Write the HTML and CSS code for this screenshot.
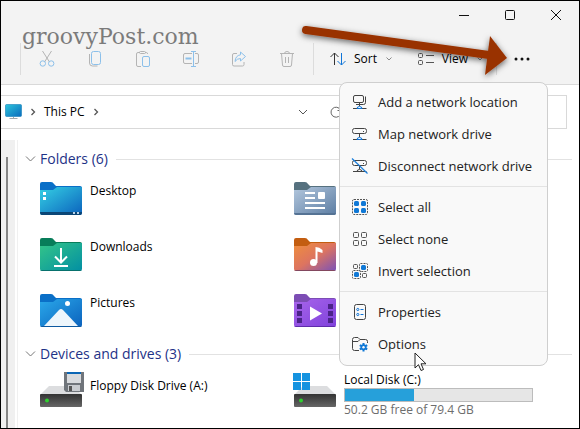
FILE: index.html
```html
<!DOCTYPE html>
<html lang="en">
<head>
<meta charset="utf-8">
<title>This PC</title>
<link rel="stylesheet" href="styles.css">
</head>
<body>
<div class="window">
  <header class="header">
    <div class="titlebar">
      <button class="caption" aria-label="Minimize"><svg width="12" height="12" viewBox="0 0 12 12"><path d="M1 6.5h10" stroke="#111" fill="none"/></svg></button>
      <button class="caption" aria-label="Maximize"><svg width="12" height="12" viewBox="0 0 12 12"><rect x="1.5" y="1.5" width="9" height="9" rx="1" stroke="#111" fill="none"/></svg></button>
      <button class="caption" aria-label="Close"><svg width="12" height="12" viewBox="0 0 12 12"><path d="M1 1l10 10M11 1L1 11" stroke="#111" fill="none"/></svg></button>
    </div>
    <div class="toolbar">
      <span class="divider"></span>
      <div class="tools">
        <button class="tool" aria-label="Cut"><svg width="16" height="18" viewBox="0 0 16 18" fill="none"><path d="M3.5 1l7 11M12.500 1l-7 11" stroke="#b4b4b4"/><circle cx="3.800" cy="13.500" r="2.700" stroke="#8cc0ea"/><circle cx="12.200" cy="13.500" r="2.700" stroke="#8cc0ea"/></svg></button>
        <button class="tool" aria-label="Copy"><svg width="16" height="18" viewBox="0 0 16 18" fill="none"><path d="M2.500 4v9q0 3 3 3h5" stroke="#b4b4b4"/><rect x="4.500" y="1.500" width="9" height="13" rx="2" stroke="#8cc0ea"/></svg></button>
        <button class="tool" aria-label="Paste"><svg width="16" height="18" viewBox="0 0 16 18" fill="none"><path d="M5 2.500H3q-1.500 0-1.500 1.500v11q0 1.500 1.500 1.500h3M10 2.500h1.500q1 0 1 1.500" stroke="#b4b4b4"/><rect x="4.500" y="1.500" width="6" height="2" rx="1" stroke="#b4b4b4"/><rect x="7.500" y="6.500" width="7" height="10" rx="1.500" stroke="#8cc0ea"/></svg></button>
        <button class="tool" aria-label="Rename"><svg width="18" height="18" viewBox="0 0 18 18" fill="none"><path d="M10 3.500H3Q1.500 3.500 1.500 5v7Q1.500 13.500 3 13.500h7M13 3.500h2q1.500 0 1.500 1.500v7q0 1.500-1.500 1.500h-2" stroke="#b4b4b4"/><path d="M9 1.500h5M9 16.500h5M11.500 1.500v15" stroke="#8cc0ea"/><path d="M3.500 8.500h6" stroke="#8cc0ea" stroke-width="2"/></svg></button>
        <button class="tool" aria-label="Share"><svg width="16" height="18" viewBox="0 0 16 18" fill="none"><path d="M6 3.500H3Q1.500 3.500 1.500 5v9.500Q1.500 16 3 16h8.500q1.500 0 1.500-1.500V12" stroke="#b4b4b4"/><path d="M9.500 2l5 4.500-5 4.500V8.500Q6 8.500 4 11.500 4.500 5.500 9.500 4.800z" stroke="#8cc0ea" stroke-linejoin="round"/></svg></button>
        <button class="tool" aria-label="Delete"><svg width="16" height="18" viewBox="0 0 16 18" fill="none"><path d="M1 3.500h14M5.500 3.500q0-2 2.500-2t2.500 2M2.500 3.500l1 11.500q0 1.500 1.500 1.500h6q1.500 0 1.500-1.500l1-11.500M6.500 7v6M9.500 7v6" stroke="#b4b4b4"/></svg></button>
      </div>
      <span class="divider"></span>
      <button class="command command-sort"><svg width="16" height="14" viewBox="0 0 16 14" fill="none"><path d="M4.500 13V1M.5 5l4-4 4 4" stroke="#333"/><path d="M11.500 1v12M7.500 9l4 4 4-4" stroke="#0f75d8"/></svg><span>Sort</span><svg width="8" height="6" viewBox="0 0 8 6" fill="none"><path d="M1.500 1.500L4 4l2.500-2.500" stroke="#888"/></svg></button>
      <button class="command command-view"><svg width="16" height="14" viewBox="0 0 16 14" fill="none" stroke="#555"><rect x=".5" y="1.500" width="4" height="4" rx="1"/><rect x=".5" y="8.500" width="4" height="4" rx="1"/><path d="M8 3.500h8M8 10.500h8"/></svg><span>View</span><svg width="8" height="6" viewBox="0 0 8 6" fill="none"><path d="M1.500 1.500L4 4l2.500-2.500" stroke="#888"/></svg></button>
      <span class="divider"></span>
      <button class="more" aria-label="See more"><svg width="16" height="4" viewBox="0 0 16 4" fill="#111"><circle cx="2" cy="2" r="1.500"/><circle cx="8" cy="2" r="1.500"/><circle cx="14" cy="2" r="1.500"/></svg></button>
    </div>
  </header>

  <nav class="addressbar" aria-label="Address">
    <div class="path">
      <svg width="17" height="16" viewBox="0 0 17 16"><defs><linearGradient id="screen" x2="1" y2="1"><stop stop-color="#2cc5dc"/><stop offset="1" stop-color="#0b6bbd"/></linearGradient></defs><rect x=".5" y=".5" width="16" height="12" rx="1" fill="url(#screen)" stroke="#1680b8" stroke-width=".6"/><path d="M8.500 13v2M4.500 14.500h8" stroke="#a3a9ad" fill="none"/></svg>
      <svg width="6" height="8" viewBox="0 0 6 8" fill="none"><path d="M1.500 1l3 3-3 3" stroke="#555" stroke-width="1.300"/></svg>
      <a class="crumb" href="#">This PC</a>
      <svg width="6" height="8" viewBox="0 0 6 8" fill="none"><path d="M1.500 1l3 3-3 3" stroke="#555" stroke-width="1.300"/></svg>
      <button class="history" aria-label="Previous locations"><svg width="10" height="8" viewBox="0 0 10 8" fill="none"><path d="M1 2l4 4 4-4" stroke="#555"/></svg></button>
      <button class="refresh" aria-label="Refresh"><svg width="12" height="12" viewBox="0 0 12 12" fill="none" stroke="#666"><path d="M10.500 4A5 5 0 1 0 11 6.500M11 .5v4H7.500"/></svg></button>
    </div>
    <input class="search" type="text" aria-label="Search This PC">
  </nav>

  <div class="body">
    <div class="sidebar"><div class="scrollthumb"></div></div>
    <main class="content">
      <section class="group">
        <h2 class="heading"><svg width="11" height="8" viewBox="0 0 11 8" fill="none"><path d="M1 1.500l4.500 4.500L10 1.500" stroke="#777"/></svg><span>Folders (6)</span></h2>
        <div class="items">
          <div class="item"><svg width="42" height="33" viewBox="0 0 42 33"><defs><linearGradient id="desk" x2="1" y2="1"><stop stop-color="#35d0e4"/><stop offset="1" stop-color="#0b62bd"/></linearGradient></defs><path d="M0 2Q0 0 2 0h9q2 0 3 2l2 2h24q2 0 2 2v14H0z" fill="#0a6fc7"/><path d="M0 8h13l4-3h25v26q0 2-2 2H2q-2 0-2-2z" fill="url(#desk)"/><path d="M0 30h42q0 3-2 3H2q-2 0-2-3z" fill="#0b4676"/><path d="M3 10h3v3H3zM3 15h3v3H3z" fill="#fff"/><path d="M33 31h2M37 31h2" stroke="#b9d2e8" stroke-width="2"/></svg><span class="name">Desktop</span></div>
          <div class="item"><svg width="42" height="33" viewBox="0 0 42 33"><defs><linearGradient id="doc" x2="1" y2="1"><stop stop-color="#b3c7dd"/><stop offset="1" stop-color="#5c7da3"/></linearGradient></defs><path d="M0 2Q0 0 2 0h9q2 0 3 2l2 2h24q2 0 2 2v14H0z" fill="#56717f"/><path d="M0 8h13l4-3h25v26q0 2-2 2H2q-2 0-2-2z" fill="url(#doc)"/><path d="M0 31h42q0 2-2 2H2q-2 0-2-2z" fill="#557394"/><path d="M11 11h10M11 16h10M11 21h20M11 26h20" stroke="#fff" stroke-width="2"/><rect x="24" y="10" width="7" height="7" rx="1" fill="#fff"/></svg></div>
          <div class="item"><svg width="42" height="33" viewBox="0 0 42 33"><defs><linearGradient id="down" x2="1" y2="1"><stop stop-color="#34c588"/><stop offset="1" stop-color="#028fa3"/></linearGradient></defs><path d="M0 2Q0 0 2 0h9q2 0 3 2l2 2h24q2 0 2 2v14H0z" fill="#087d5a"/><path d="M0 8h13l4-3h25v26q0 2-2 2H2q-2 0-2-2z" fill="url(#down)"/><path d="M0 32h42l-2 1H2z" fill="#08716d"/><path d="M21 10v14M15 18.500l6 6 6-6M14 28h14" stroke="#fff" stroke-width="2" fill="none"/></svg><span class="name">Downloads</span></div>
          <div class="item"><svg width="42" height="33" viewBox="0 0 42 33"><defs><linearGradient id="music" x2="1" y2="1"><stop stop-color="#ef8f3c"/><stop offset=".5" stop-color="#dd7460"/><stop offset="1" stop-color="#7a52b8"/></linearGradient></defs><path d="M0 2Q0 0 2 0h9q2 0 3 2l2 2h24q2 0 2 2v14H0z" fill="#c35d10"/><path d="M0 8h13l4-3h25v26q0 2-2 2H2q-2 0-2-2z" fill="url(#music)"/><path d="M0 32h42l-2 1H2z" fill="#83475f"/><circle cx="19.500" cy="24.500" r="3.500" fill="#fff"/><path d="M21.500 9q4 0 7 3v3l-5-1.500V25h-2z" fill="#fff"/></svg></div>
          <div class="item"><svg width="42" height="33" viewBox="0 0 42 33"><defs><linearGradient id="pic" x2="1" y2="1"><stop stop-color="#2aa8ea"/><stop offset="1" stop-color="#0b62bd"/></linearGradient></defs><path d="M0 2Q0 0 2 0h9q2 0 3 2l2 2h24q2 0 2 2v14H0z" fill="#0a6fc7"/><path d="M0 8h13l4-3h25v26q0 2-2 2H2q-2 0-2-2z" fill="url(#pic)"/><circle cx="27.500" cy="9.500" r="2.500" fill="#fff"/><path d="M4 32l15-16q2-2 4 0l15 16z" fill="#edf6fc"/><path d="M0 32h42l-2 1H2z" fill="#0d59a0"/></svg><span class="name">Pictures</span></div>
          <div class="item"><svg width="42" height="33" viewBox="0 0 42 33"><defs><linearGradient id="video" x2="1" y2="1"><stop stop-color="#a764ea"/><stop offset="1" stop-color="#8042dc"/></linearGradient></defs><path d="M0 2Q0 0 2 0h9q2 0 3 2l2 2h24q2 0 2 2v14H0z" fill="#7c4db4"/><path d="M0 8h13l4-3h25v26q0 2-2 2H2q-2 0-2-2z" fill="url(#video)"/><path d="M3 10h5v5H3zM3 17h5v5H3zM3 24h5v5H3zM34 10h5v5h-5zM34 17h5v5h-5zM34 24h5v5h-5z" fill="#4b2389"/><path d="M16 12.500l12 7-12 7z" fill="#fff"/><path d="M0 32h42l-2 1H2z" fill="#5e2cab"/></svg></div>
        </div>
      </section>
      <section class="group">
        <h2 class="heading"><svg width="11" height="8" viewBox="0 0 11 8" fill="none"><path d="M1 1.500l4.500 4.500L10 1.500" stroke="#777"/></svg><span>Devices and drives (3)</span></h2>
        <div class="items drives">
          <div class="item"><svg width="44" height="36" viewBox="0 0 44 36"><defs><linearGradient id="drive" x2="0" y2="1"><stop stop-color="#333"/><stop offset="1" stop-color="#666"/></linearGradient></defs><path d="M9 14h24l9 9H0z" fill="#dcdddf"/><rect y="22" width="42" height="13" rx="1" fill="url(#drive)"/><circle cx="7" cy="28.500" r="2" fill="#2ed12e"/><path d="M24 0h20v20H26l-2-2z" fill="#70757b"/><path d="M27 0h14v11H27z" fill="#d9dbde"/><path d="M27 0h14v2H27z" fill="#0b66b5"/><path d="M28 13h12v6H28z" fill="#c9ccd0"/><path d="M29 14h3v5h-3z" fill="#555"/></svg><span class="name">Floppy Disk Drive (A:)</span></div>
          <div class="item"><svg width="42" height="36" viewBox="0 0 42 36"><path d="M9 14h24l9 9H0z" fill="#dcdddf"/><rect y="22" width="42" height="13" rx="1" fill="url(#drive)"/><circle cx="7" cy="28.500" r="2" fill="#2ed12e"/><path d="M-1 1h8v8h-8zM8 1h8v8H8zM-1 10h8v8h-8zM8 10h8v8H8z" fill="#1593e0"/></svg>
            <div class="disk"><span id="disk-name">Local Disk (C:)</span><div class="usage" role="meter" aria-labelledby="disk-name" aria-valuemin="0" aria-valuemax="79.4" aria-valuenow="29.2"><div class="used" style="width: 36.8%"></div></div><span class="free">50.2 GB free of 79.4 GB</span></div></div>
        </div>
      </section>
    </main>
  </div>

  <div class="menu" role="menu">
    <button class="entry" role="menuitem"><svg width="16" height="16" viewBox="0 0 16 16" fill="none" stroke="#444"><rect x="1.500" y="1.500" width="10" height="7" rx="1.500"/><path d="M13.500 2.500v6q0 2-2 2H4M7.500 9v3M1 14.500h4M10 14.500h4.500"/><path d="M5 14.500q0-2 2.500-2t2.500 2z" stroke="#0f75d8"/></svg>Add a network location</button>
    <button class="entry" role="menuitem"><svg width="16" height="16" viewBox="0 0 16 16" fill="none" stroke="#444"><rect x=".5" y="2.500" width="14" height="5" rx="2"/><path d="M7.500 8v3M1 13.500h4M10 13.500h4.500M11 5.500h1"/><path d="M5 13.500q0-2 2.500-2t2.500 2z" stroke="#0f75d8"/></svg>Map network drive</button>
    <button class="entry" role="menuitem"><svg width="16" height="16" viewBox="0 0 16 16" fill="none" stroke="#444"><rect x=".5" y="2.500" width="14" height="5" rx="2"/><path d="M7.500 8v3M1 13.500h4M10 13.500h4.500M11 5.500h1M5 13.500q0-2 2.500-2t2.500 2z"/><path d="M0 .5l15.500 15" stroke="#1c7fdb" stroke-width="1.200"/></svg>Disconnect network drive</button>
    <hr class="rule">
    <button class="entry" role="menuitem"><svg width="16" height="16" viewBox="0 0 16 16" fill="none"><rect x=".5" y=".5" width="15" height="15" rx="1.500" stroke="#555" stroke-dasharray="2 1"/><g fill="#0f78d6"><rect x="2" y="2" width="5" height="5" rx="1.500"/><rect x="9" y="2" width="5" height="5" rx="1.500"/><rect x="2" y="9" width="5" height="5" rx="1.500"/><rect x="9" y="9" width="5" height="5" rx="1.500"/></g></svg>Select all</button>
    <button class="entry" role="menuitem"><svg width="16" height="16" viewBox="0 0 16 16" fill="none" stroke="#555"><rect x="1.500" y="1.500" width="5" height="5" rx="1"/><rect x="9.500" y="1.500" width="5" height="5" rx="1"/><rect x="1.500" y="9.500" width="5" height="5" rx="1"/><rect x="9.500" y="9.500" width="5" height="5" rx="1"/></svg>Select none</button>
    <button class="entry" role="menuitem"><svg width="16" height="16" viewBox="0 0 16 16" fill="none" stroke="#555"><rect x="1.500" y="1.500" width="4" height="4" rx="1"/><rect x="10.500" y="10.500" width="4" height="4" rx="1"/><rect x="7.500" y=".5" width="8" height="8" rx="1" stroke-dasharray="2 1"/><rect x=".5" y="7.500" width="8" height="8" rx="1" stroke-dasharray="2 1"/><g fill="#0f78d6" stroke="none"><rect x="9" y="2" width="5" height="5" rx="1.500"/><rect x="2" y="9" width="5" height="5" rx="1.500"/></g></svg>Invert selection</button>
    <hr class="rule">
    <button class="entry" role="menuitem"><svg width="16" height="16" viewBox="0 0 16 16" fill="none"><rect x="2.500" y=".5" width="11" height="15" rx="2" stroke="#444"/><path d="M8.500 5.500h3M8.500 10.500h3" stroke="#0f75d8"/><circle cx="5.800" cy="5.500" r="1.100" stroke="#0f75d8"/><circle cx="5.800" cy="10.500" r="1.100" stroke="#0f75d8"/></svg>Properties</button>
    <button class="entry" role="menuitem"><svg width="16" height="16" viewBox="0 0 16 16" fill="none"><path d="M7 14.500H2.500q-2 0-2-2v-9q0-2 2-2H6l2 2h5.500q2 0 2 2V7M.5 5.500H6l2-2" stroke="#444"/><g fill="#0f78d6" stroke="#0f78d6" stroke-width="2"><path d="M11.500 7v8.500M7.800 9.100l7.400 4.300M7.800 13.400l7.400-4.300"/></g><circle cx="11.500" cy="11.250" r="3" fill="#0f78d6"/><circle cx="11.500" cy="11.250" r="1.200" fill="#f9f9f9"/></svg>Options</button>
  </div>

  <svg class="arrow" width="230" height="80" viewBox="0 0 230 80" aria-hidden="true"><defs><filter id="soft" x="-10%" y="-30%" width="120%" height="160%"><feDropShadow dx="0" dy="2" stdDeviation="3" flood-color="#000" flood-opacity=".6"/></filter></defs><g filter="url(#soft)"><path d="M5 20L188 45" stroke="#993300" stroke-width="8" stroke-linecap="round"/><path d="M189 26l17 22-22 17z" fill="#993300"/></g></svg>
  <span class="watermark">groovyPost.com</span>
  <svg class="cursor" width="13" height="20" viewBox="0 0 13 20" aria-hidden="true"><path d="M1 1v15l3.500-3.300 2.500 5.800 2.500-1-2.500-5.700H12z" fill="#fff" stroke="#222"/></svg>
</div>
</body>
</html>
```
FILE: styles.css
```css
* { box-sizing: border-box; }

body {
  margin: 0;
  background: #fff;
  color: #000;
  font: 12px/16px "Open Sans", "Noto Sans", sans-serif;
}

svg { display: block; flex: none; overflow: visible; }

button {
  display: flex;
  align-items: center;
  justify-content: center;
  padding: 0;
  border: 0;
  background: none;
  color: inherit;
  font: inherit;
}

.window {
  position: relative;
  display: flex;
  flex-direction: column;
  min-height: 100vh;
  border: 1px solid #000;
  overflow: hidden;
}

.header {
  background: #f3f3f3;
  border-bottom: 1px solid #d9d9d9;
}

.titlebar {
  display: flex;
  justify-content: flex-end;
  height: 28px;
}

.caption { width: 46px; }

.toolbar {
  display: flex;
  align-items: center;
  height: 55px;
  padding: 4px 32px 0 19px;
}

.divider {
  width: 1px;
  height: 32px;
  background: #dcdcdc;
}

.tools {
  display: flex;
  flex: none;
  margin: 0 2px;
}

.tool { width: 48px; height: 32px; }

.command { gap: 8px; }
.command-sort { margin-left: 16px; }
.command-view { margin: 0 12px 0 auto; }
.more { width: 50px; height: 32px; }

.addressbar {
  display: flex;
  gap: 8px;
  padding: 10px 12px 0 0;
}

.path {
  display: flex;
  flex: 1;
  align-items: center;
  gap: 8px;
  height: 34px;
  padding: 0 96px 0 4px;
  border: 1px solid #d9d9d9;
  border-left: 0;
}

.crumb {
  color: #000;
  text-decoration: none;
}

.history { margin-left: auto; }
.refresh { margin-left: 14px; }

.search {
  width: 120px;
  height: 34px;
  border: 1px solid #d9d9d9;
  background: #fff;
}

.body {
  display: flex;
  flex: 1;
  padding-top: 11px;
}

.sidebar {
  width: 17px;
  padding: 17px 0 0 5px;
  background: linear-gradient(90deg, #f0f0f0 14px, #fff 14px, #fff 16px, #f0f0f0 16px);
}

.scrollthumb {
  width: 2px;
  height: 100%;
  background: #858585;
}

.content {
  flex: 1;
  padding: 8px 7px 0;
}

.heading {
  display: flex;
  align-items: center;
  gap: 4px;
  height: 22px;
  margin: 0;
  color: #1e3287;
  font-size: 14px;
  font-weight: 400;
}

.heading::after {
  content: "";
  flex: 1;
  height: 1px;
  margin-left: 4px;
  background: #e2e2e2;
}

.items {
  display: grid;
  grid-template-columns: 254px 1fr;
  grid-auto-rows: 56px;
  padding: 12px 0 0 15px;
}

.group + .group { margin-top: -7px; }
.drives { padding-top: 7px; }

.item {
  display: flex;
  align-items: flex-start;
  gap: 8px;
}

.drives .name { margin-top: 6px; margin-left: -2px; }
.name { margin-top: 1px; }

.disk {
  display: flex;
  flex-direction: column;
  width: 189px;
}

.usage {
  height: 14px;
  border: 1px solid #bcbcbc;
  background: #e6e6e6;
}

.used {
  height: 100%;
  background: #26a0da;
}

.free { color: #6d6d6d; }

.menu {
  position: absolute;
  top: 81px;
  right: 31px;
  width: 209px;
  padding: 3px 0 5px;
  border: 1px solid #cfcfcf;
  border-radius: 8px;
  background: #f9f9f9;
}

.entry {
  gap: 10px;
  justify-content: flex-start;
  width: 100%;
  height: 32px;
  padding: 0 12px;
  color: #222;
  font-size: 13px;
  white-space: nowrap;
}

.rule {
  height: 1px;
  margin: 4px 0;
  border: 0;
  background: #e3e3e3;
}

.arrow {
  position: absolute;
  top: 9px;
  right: 48px;
}

.watermark {
  position: absolute;
  top: 20px;
  left: 21px;
  color: #7b7b7b;
  font: 22px/32px "DejaVu Serif", serif;
}

.cursor {
  position: absolute;
  top: 351px;
  left: 413px;
}
```
